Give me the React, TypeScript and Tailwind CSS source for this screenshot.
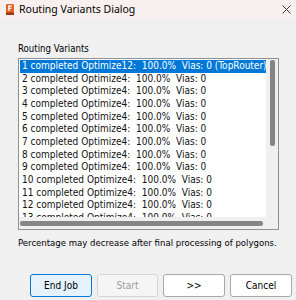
import React from "react";

const rows = [
  "1 completed Optimize12:  100.0%  Vias: 0 (TopRouter)",
  "2 completed Optimize4:  100.0%  Vias: 0",
  "3 completed Optimize4:  100.0%  Vias: 0",
  "4 completed Optimize4:  100.0%  Vias: 0",
  "5 completed Optimize4:  100.0%  Vias: 0",
  "6 completed Optimize4:  100.0%  Vias: 0",
  "7 completed Optimize4:  100.0%  Vias: 0",
  "8 completed Optimize4:  100.0%  Vias: 0",
  "9 completed Optimize4:  100.0%  Vias: 0",
  "10 completed Optimize4:  100.0%  Vias: 0",
  "11 completed Optimize4:  100.0%  Vias: 0",
  "12 completed Optimize4:  100.0%  Vias: 0",
  "13 completed Optimize4:  100.0%  Vias: 0",
];

const body = { fontFamily: "'DejaVu Sans Condensed', 'DejaVu Sans', sans-serif" };

export default function App() {
  return (
    <div className="w-[296px] h-[300px] bg-[#f0f0f0] flex flex-col overflow-hidden text-black">
      {/* title bar */}
      <div
        className="h-[19px] bg-[#f7f0ee] flex items-center pl-[6px] pr-[3px]"
        style={{ fontFamily: "'Noto Sans', 'Liberation Sans', sans-serif" }}
      >
        <svg width="8" height="11" viewBox="0 0 8 11" className="shrink-0">
          <rect x="0" y="0" width="8" height="11" rx="1.2" fill="#e8632b" />
          <rect x="0" y="8.5" width="8" height="2.5" fill="#9c3a14" />
          <rect x="2.3" y="1.5" width="1.3" height="5.5" fill="#fff" />
          <rect x="2.3" y="1.5" width="3.5" height="1.2" fill="#fff" />
          <rect x="2.3" y="3.8" width="3" height="1.1" fill="#fff" />
        </svg>
        <span className="ml-[5px] text-[10.5px] leading-none">Routing Variants Dialog</span>
        <span className="ml-auto mr-[2px] flex">
          <svg width="9" height="9" viewBox="0 0 9 9">
            <path d="M0.5 0.5 L8.5 8.5 M8.5 0.5 L0.5 8.5" stroke="#222" strokeWidth="0.9" />
          </svg>
        </span>
      </div>

      <div className="flex flex-col pl-[18px] pr-[17px]" style={body}>
        <div className="mt-[23px] text-[9.6px] leading-[13px]">Routing Variants</div>
        <div className="mt-[3px] h-[172px] border border-[#8d9096] bg-white flex flex-col">
          <div className="flex flex-1 min-h-0">
            <div className="flex-1 min-w-0 overflow-hidden pt-[1px] pl-[1px]">
              {rows.map((r, i) => (
                <div
                  key={i}
                  className={
                    "h-[12.67px] leading-[12.67px] text-[10px] whitespace-pre pl-[2px] " +
                    (i === 0 ? "bg-[#0078d7] text-white" : "text-[#111]")
                  }
                >
                  {r}
                </div>
              ))}
            </div>
            <div className="w-[12px] bg-[#f0f0f0] flex justify-center pt-[1px]">
              <div className="w-[5px] h-[86px] bg-[#858585] rounded-[2px]" />
            </div>
          </div>
          <div className="h-[12px] bg-[#f0f0f0] flex items-center pl-[1px] pr-[15px]">
            <div className="flex-1 h-[5px] bg-[#858585] rounded-[2px]" />
          </div>
        </div>
        <div className="mt-[6px] text-[9.5px] leading-[13px] whitespace-nowrap">
          Percentage may decrease after final processing of polygons.
        </div>
      </div>

      <div className="mt-auto mb-[3px] flex justify-end gap-[5px] pr-[4px]" style={body}>
        <button className="w-[62px] h-[23px] rounded-[3px] border border-[#0078d7] bg-[#e5f1fb] text-[10px]">
          End Job
        </button>
        <button className="w-[61px] h-[23px] rounded-[3px] border border-[#d6d6d6] bg-[#f5f5f5] text-[10px] text-[#9d9d9d]">
          Start
        </button>
        <button className="w-[62px] h-[23px] rounded-[3px] border border-[#a8a8a8] bg-white text-[10px]">
          &gt;&gt;
        </button>
        <button className="w-[62px] h-[23px] rounded-[3px] border border-[#a8a8a8] bg-white text-[10px]">
          Cancel
        </button>
      </div>
    </div>
  );
}
